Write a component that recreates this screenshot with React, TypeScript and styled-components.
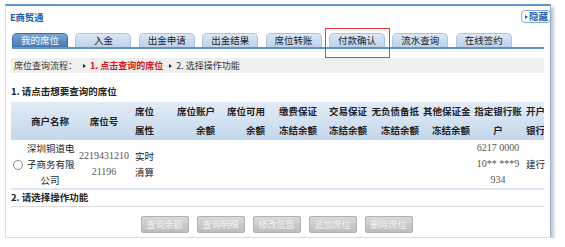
import styled, { createGlobalStyle } from 'styled-components'

const GlobalStyle = createGlobalStyle`
   body {
      margin: 0;
      background: #fff;
      font-family: "Noto Sans CJK SC", "Liberation Sans", sans-serif;
      font-size: 9px;
      color: #222;
   }
`

const Panel = styled.div`
   position: relative;
   margin: 4px 0 0 5px;
   width: 546px;
   height: 234px;
   box-sizing: border-box;
   border: 1px solid #d3dfee;
   border-top: 2px solid #5f93cc;
   border-right-color: #8fb0d8;
   box-shadow: 3px 3px 3px rgba(0, 0, 0, 0.22);
   padding: 0 5px 0 4px;
`

const TitleRow = styled.div`
   display: flex;
   align-items: center;
   justify-content: space-between;
   height: 21px;
`

const Title = styled.div`
   font-weight: bold;
   font-size: 9.5px;
   color: #1f5ea6;
   letter-spacing: -0.3px;
`

const HideButton = styled.div`
   margin-right: -6px;
   height: 11px;
   line-height: 11px;
   padding: 0 2px 0 3px;
   border: 1px solid #86a9d2;
   border-radius: 4px;
   font-size: 9.5px;
   font-weight: bold;
   color: #1f5ea6;
   display: flex;
   align-items: center;
   gap: 1px;
   &::before {
      content: '';
      border-left: 3px solid #1f5ea6;
      border-top: 2px solid transparent;
      border-bottom: 2px solid transparent;
   }
`

const TabBar = styled.div`
   display: flex;
   gap: 7.4px;
   margin: 6px 0 0 2px;
   width: 532px;
   border-bottom: 2px solid #5f93cc;
`

const Tab = styled.div<{ $active?: boolean }>`
   position: relative;
   box-sizing: border-box;
   width: 56px;
   height: 14px;
   line-height: 13px;
   text-align: center;
   font-size: 9.5px;
   border: 1px solid ${({ $active }) => ($active ? '#3b6ca8' : '#a9c3e0')};
   border-bottom: none;
   border-radius: 5px 5px 0 0;
   color: ${({ $active }) => ($active ? '#fff' : '#222')};
   background: ${({ $active }) =>
      $active
         ? 'linear-gradient(#79a5d6, #4878b2)'
         : 'linear-gradient(#dbe7f4, #bcd2ea)'};
`

const Highlight = styled.div`
   position: absolute;
   left: -5px;
   right: -6px;
   top: -6px;
   bottom: -11px;
   border: 1px solid #e8393c;
`

const FlowBar = styled.div`
   margin: 9px 0 0 1px;
   width: 533px;
   height: 15px;
   background: #efefef;
   display: flex;
   align-items: center;
   padding-left: 3px;
   box-sizing: border-box;
   color: #333;
   gap: 2px;
`

const Arrow = styled.span`
   display: inline-block;
   margin: 0 2px 0 4px;
   border-left: 3px solid #222;
   border-top: 2.5px solid transparent;
   border-bottom: 2.5px solid transparent;
`

const Step = styled.span<{ $current?: boolean }>`
   color: ${({ $current }) => ($current ? '#d2141a' : '#333')};
   font-weight: ${({ $current }) => ($current ? 'bold' : 'normal')};
`

const SectionTitle = styled.div<{ $line?: boolean }>`
   margin-left: 1px;
   width: 533px;
   height: ${({ $line }) => ($line ? '16px' : '14px')};
   line-height: 14px;
   font-weight: bold;
   font-size: 9.5px;
   border-bottom: ${({ $line }) => ($line ? '1px solid #dcdcdc' : 'none')};
`

const Table = styled.table`
   margin: 4px 0 0 1px;
   width: 533px;
   table-layout: fixed;
   border-collapse: collapse;
   font-size: 9px;
`

const HeadRow = styled.tr`
   background: linear-gradient(#e2ebf6, #c4d7ec);
   height: 37px;
`

const Th = styled.th<{ $align?: string }>`
   font-weight: bold;
   font-size: 9.5px;
   line-height: 19px;
   padding: 0 2px;
   text-align: ${({ $align }) => $align || 'center'};
   white-space: nowrap;
   overflow: hidden;
   color: #222;
`

const BodyRow = styled.tr`
   height: 48px;
   border-bottom: 2px solid #dde7f3;
`

const Td = styled.td<{ $align?: string; $mono?: boolean }>`
   line-height: 16px;
   padding: 0 2px;
   white-space: nowrap;
   text-align: ${({ $align }) => $align || 'center'};
   color: ${({ $mono }) => ($mono ? '#555' : '#222')};
   font-family: ${({ $mono }) =>
      $mono ? '"Liberation Serif", serif' : 'inherit'};
   font-size: ${({ $mono }) => ($mono ? '10px' : '9.5px')};
`

const Radio = styled.span`
   display: inline-block;
   width: 8px;
   height: 8px;
   border: 1px solid #8a8a8a;
   border-radius: 50%;
   background: #fff;
   vertical-align: middle;
`

const ButtonRow = styled.div`
   display: flex;
   justify-content: center;
   gap: 8px;
   margin-top: 9px;
   width: 533px;
`

const ActionButton = styled.div`
   width: 46px;
   height: 15px;
   line-height: 15px;
   text-align: center;
   font-size: 9px;
   color: #f3f3f3;
   border: 1px solid #b3b3b3;
   border-radius: 2px;
   background: linear-gradient(#d9d9d9, #bdbdbd);
`

const tabs = ['我的席位', '入金', '出金申请', '出金结果', '席位转账', '付款确认', '流水查询', '在线签约']
const actions = ['查询余额', '查询明细', '修改信息', '追加席位', '删除席位']
const colWidths = [14, 50, 58, 34, 50, 50, 52, 50, 52, 51, 52, 20]

export default function App() {
   return (
      <>
         <GlobalStyle />
         <Panel>
            <TitleRow>
               <Title>E商贸通</Title>
               <HideButton>隐藏</HideButton>
            </TitleRow>
            <TabBar>
               {tabs.map((t, i) => (
                  <Tab key={t} $active={i === 0}>
                     {t}
                     {t === '付款确认' && <Highlight />}
                  </Tab>
               ))}
            </TabBar>
            <FlowBar>
               <span>席位查询流程：</span>
               <Arrow />
               <Step $current>1. 点击查询的席位</Step>
               <Arrow />
               <Step>2. 选择操作功能</Step>
            </FlowBar>
            <SectionTitle style={{ marginTop: 11 }}>1. 请点击想要查询的席位</SectionTitle>
            <Table>
               <colgroup>
                  {colWidths.map((w, i) => (
                     <col key={i} style={{ width: w }} />
                  ))}
               </colgroup>
               <thead>
                  <HeadRow>
                     <Th />
                     <Th>商户名称</Th>
                     <Th>席位号</Th>
                     <Th $align="left">席位<br />属性</Th>
                     <Th $align="right">席位账户<br />余额</Th>
                     <Th $align="right">席位可用<br />余额</Th>
                     <Th $align="right">缴费保证<br />冻结余额</Th>
                     <Th $align="right">交易保证<br />冻结余额</Th>
                     <Th $align="right">无负债备抵<br />冻结余额</Th>
                     <Th $align="right">其他保证金<br />冻结余额</Th>
                     <Th>指定银行账<br />户</Th>
                     <Th $align="left">开户<br />银行</Th>
                  </HeadRow>
               </thead>
               <tbody>
                  <BodyRow>
                     <Td $align="left"><Radio /></Td>
                     <Td>深圳铜道电<br />子商务有限<br />公司</Td>
                     <Td $mono>2219431210<br />21196</Td>
                     <Td $align="left">实时<br />清算</Td>
                     <Td />
                     <Td />
                     <Td />
                     <Td />
                     <Td />
                     <Td />
                     <Td $mono>6217 0000<br />10** ***9<br />934</Td>
                     <Td $align="left">建行</Td>
                  </BodyRow>
               </tbody>
            </Table>
            <SectionTitle $line style={{ marginTop: 0 }}>2. 请选择操作功能</SectionTitle>
            <ButtonRow>
               {actions.map(a => (
                  <ActionButton key={a}>{a}</ActionButton>
               ))}
            </ButtonRow>
         </Panel>
      </>
   )
}
